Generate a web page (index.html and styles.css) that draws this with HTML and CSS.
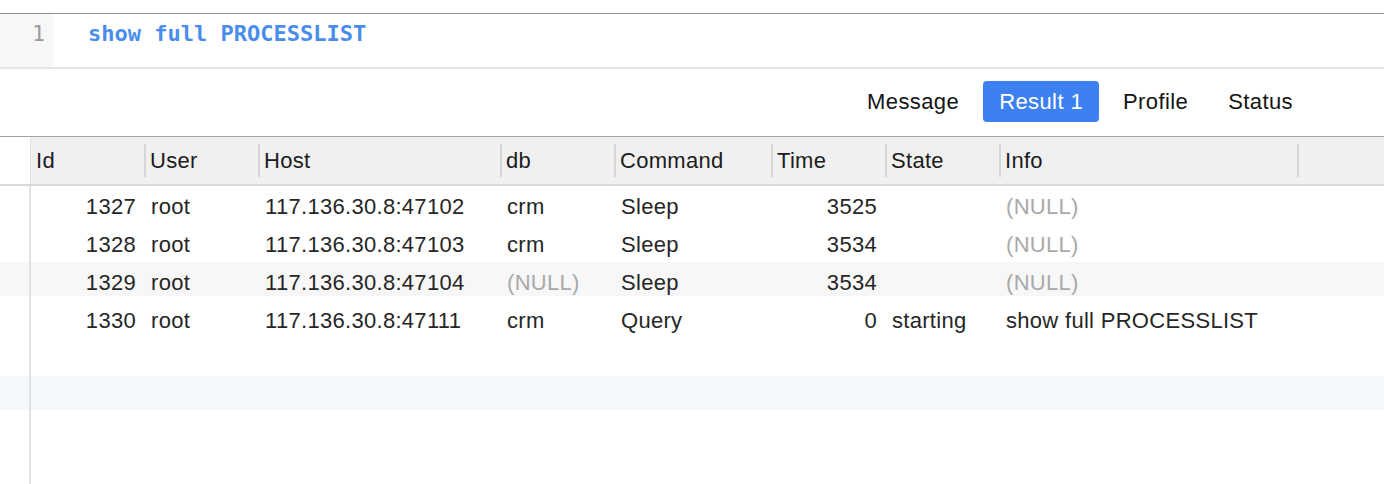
FILE: index.html
```html
<!DOCTYPE html>
<html>
<head>
<meta charset="utf-8">
<link rel="stylesheet" href="styles.css">
</head>
<body>
<div class="app">
  <div class="editor">
    <div class="gutter"><span class="lineno">1</span></div>
    <div class="code">show full PROCESSLIST</div>
  </div>
  <div class="tabbar">
    <button class="tab">Message</button>
    <button class="tab active">Result 1</button>
    <button class="tab">Profile</button>
    <button class="tab">Status</button>
  </div>
  <div class="grid">
    <div class="row head">
      <div class="gcell"></div>
      <div class="hcell first">Id</div>
      <div class="hcell">User</div>
      <div class="hcell">Host</div>
      <div class="hcell">db</div>
      <div class="hcell">Command</div>
      <div class="hcell">Time</div>
      <div class="hcell">State</div>
      <div class="hcell">Info</div>
      <div class="hcell"></div>
    </div>
    <div class="body">
      <div class="row data">
        <div class="gcell"></div>
        <div class="cell num">1327</div><div class="cell">root</div><div class="cell">117.136.30.8:47102</div><div class="cell">crm</div><div class="cell">Sleep</div><div class="cell num">3525</div><div class="cell"></div><div class="cell null">(NULL)</div><div class="cell"></div>
      </div>
      <div class="row data">
        <div class="gcell"></div>
        <div class="cell num">1328</div><div class="cell">root</div><div class="cell">117.136.30.8:47103</div><div class="cell">crm</div><div class="cell">Sleep</div><div class="cell num">3534</div><div class="cell"></div><div class="cell null">(NULL)</div><div class="cell"></div>
      </div>
      <div class="row data gray">
        <div class="gcell"></div>
        <div class="cell num">1329</div><div class="cell">root</div><div class="cell">117.136.30.8:47104</div><div class="cell null">(NULL)</div><div class="cell">Sleep</div><div class="cell num">3534</div><div class="cell"></div><div class="cell null">(NULL)</div><div class="cell"></div>
      </div>
      <div class="row data">
        <div class="gcell"></div>
        <div class="cell num">1330</div><div class="cell">root</div><div class="cell">117.136.30.8:47111</div><div class="cell">crm</div><div class="cell">Query</div><div class="cell num">0</div><div class="cell">starting</div><div class="cell">show full PROCESSLIST</div><div class="cell"></div>
      </div>
      <div class="row data">
        <div class="gcell"></div>
      </div>
      <div class="row data blue">
        <div class="gcell"></div>
      </div>
    </div>
  </div>
</div>
</body>
</html>
```

FILE: styles.css
```css
* { box-sizing: border-box; }
html, body { margin: 0; padding: 0; background: #ffffff; }
body {
  font-family: "Liberation Sans", Arial, sans-serif;
  font-size: 22px;
  color: #262626;
  width: 1384px;
  height: 484px;
  overflow: hidden;
}
.app {
  padding-top: 13px;
  display: flex;
  flex-direction: column;
  height: 484px;
}
.editor {
  border-top: 1px solid #8f8f8f;
  height: 56px;
  border-bottom: 2px solid #e6e6e6;
  display: flex;
}
.gutter {
  width: 53px;
  background: #f7f7f7;
  text-align: right;
  padding-right: 8px;
  padding-top: 5px;
}
.lineno {
  font-family: "DejaVu Sans Mono", "Liberation Mono", monospace;
  font-size: 21px;
  line-height: 30px;
  color: #9a9a9a;
}
.code {
  padding-left: 35px;
  padding-top: 5px;
  font-family: "DejaVu Sans Mono", "Liberation Mono", monospace;
  font-weight: bold;
  font-size: 22px;
  line-height: 30px;
  color: #4a8cec;
}
.tabbar {
  height: 68px;
  border-bottom: 1px solid #a3a3a3;
  display: flex;
  justify-content: flex-end;
  align-items: flex-start;
  gap: 8px;
  padding-top: 12px;
  padding-right: 75px;
}
.tab {
  font-family: "Liberation Sans", Arial, sans-serif;
  font-size: 22px;
  letter-spacing: 0.4px;
  height: 41px;
  line-height: 41px;
  padding: 0 16px;
  border: none;
  border-radius: 4px;
  background: transparent;
  color: #141414;
}
.tab.active {
  background: #3d80f0;
  color: #ffffff;
}
.grid {
  flex: 1;
  display: flex;
  flex-direction: column;
}
.row {
  display: grid;
  grid-template-columns: 30px 114px 114px 242px 114px 157px 114px 114px 298px 1fr;
}
.head {
  height: 49px;
  border-bottom: 2px solid #d9d9d9;
}
.head .gcell { background: #ffffff; }
.hcell {
  background: #f0f0f0;
  padding-left: 6px;
  padding-top: 11px;
  line-height: 25px;
  letter-spacing: 0.3px;
  position: relative;
  color: #1c1c1c;
}
.hcell::before {
  content: "";
  position: absolute;
  left: 0;
  top: 7px;
  width: 2px;
  height: 33px;
  background: #d6d6d6;
}
.hcell.first::before { top: 0; height: 47px; background: #e4e4e4; width: 1px; }
.body {
  flex: 1;
  display: flex;
  flex-direction: column;
  gap: 4px;
  background: linear-gradient(#e3e3e3, #e3e3e3) no-repeat 29px 0 / 2px 100%;
}
.data {
  height: 34px;
}
.data .gcell { border-right: 2px solid #e3e3e3; margin-right: -1px; }
.data.gray { background: #f7f7f7; }
.data.blue { background: #f4f7fc; }
.cell {
  padding: 8px 7px 0 7px;
  line-height: 25px;
  letter-spacing: 0.3px;
  white-space: nowrap;
}
.cell.num { text-align: right; padding-right: 8px; }
.cell.null { color: #a9a9a9; }
```
